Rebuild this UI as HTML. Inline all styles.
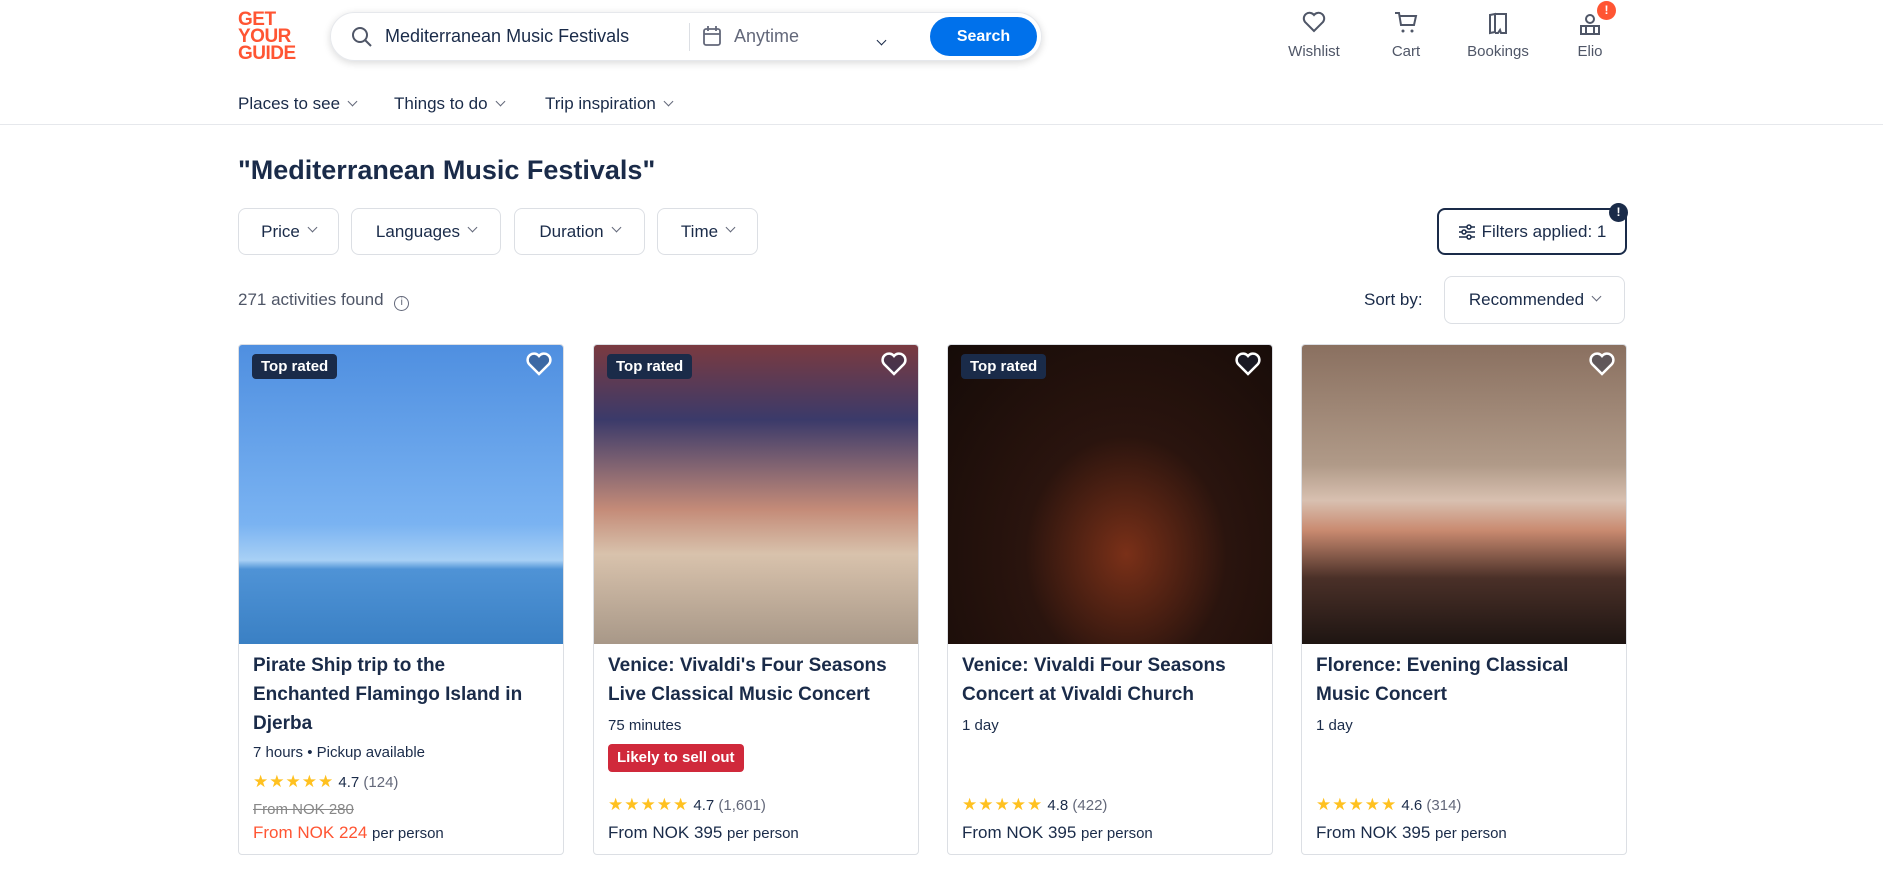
<!DOCTYPE html>
<html><head><meta charset="utf-8"><style>
*{box-sizing:border-box;margin:0;padding:0}
body{width:1883px;height:884px;overflow:hidden;background:#fff;font-family:"Liberation Sans",Arial,sans-serif;color:#1a2b49;position:relative}
.abs{position:absolute}
.logo{left:238px;top:11px;color:#ff5533;font-weight:bold;font-size:19px;line-height:17px;letter-spacing:-0.5px}
.search{left:330px;top:12px;width:712px;height:49px;border-radius:25px;box-shadow:0 2px 8px rgba(0,0,0,.15);border:1px solid #e6e8ec}
.sbtn{left:930px;top:17px;width:107px;height:39px;border-radius:20px;background:#0071eb;color:#fff;font-weight:bold;font-size:16px;text-align:center;line-height:39px}
.hi{text-align:center;font-size:15px;color:#4f5667;width:90px}
.nav{top:94px;font-size:17px}
.chev{display:inline-block;width:7px;height:7px;border-right:1.5px solid #63687a;border-bottom:1.5px solid #63687a;transform:rotate(45deg);margin-left:9px;position:relative;top:-4px}
.fb{top:208px;height:47px;border:1.5px solid #dcdfe4;border-radius:8px;font-size:17px;display:flex;align-items:center;justify-content:center}
.card{top:344px;width:326px;height:511px;border:1px solid #dcdfe4;border-radius:4px;overflow:hidden}
.img{height:299px;position:relative}
.tag{position:absolute;left:13px;top:9px;background:#1a2b49;color:#fff;font-weight:bold;font-size:15px;padding:4px 9px;border-radius:4px}
.heart{position:absolute;right:10px;top:6px}
.body>div{position:absolute;left:14px;line-height:28px}
.t{font-weight:bold;font-size:19px;line-height:29px!important;top:306px}
.m{font-size:15px}
.r{font-size:15px;color:#1a2b49}
.st{color:#ffc120;font-size:17px;letter-spacing:1px}
.p{font-size:17px}
</style></head><body>
<div class="abs logo">GET<br>YOUR<br>GUIDE</div>
<div class="abs search">
 <svg class="abs" style="left:20px;top:13px" width="22" height="22" viewBox="0 0 22 22"><circle cx="9" cy="9" r="7" fill="none" stroke="#4f5667" stroke-width="2"/><path d="M14 14l6 6" stroke="#4f5667" stroke-width="2"/></svg>
 <div class="abs" style="left:54px;top:13px;font-size:18px">Mediterranean Music Festivals</div>
 <div class="abs" style="left:358px;top:10px;width:1px;height:28px;background:#dcdfe4"></div>
 <svg class="abs" style="left:371px;top:12px" width="20" height="22" viewBox="0 0 20 22"><rect x="2" y="4" width="16" height="16" rx="2" fill="none" stroke="#63687a" stroke-width="1.8"/><path d="M2 9h16M6 1v5M14 1v5" stroke="#63687a" stroke-width="1.8"/></svg>
 <div class="abs" style="left:403px;top:13px;font-size:18px;color:#63687a">Anytime</div>
 <span class="abs chev" style="left:547px;top:18px;margin:0;border-color:#1a2b49"></span>
</div>
<div class="abs sbtn">Search</div>
<svg class="abs" style="left:1302px;top:11px" width="24" height="22" viewBox="0 0 24 22"><path d="M12 20L3 11a5 5 0 0 1 9-7 5 5 0 0 1 9 7z" fill="none" stroke="#4f5667" stroke-width="2"/></svg>
<div class="abs hi" style="left:1269px;top:43px">Wishlist</div>
<svg class="abs" style="left:1394px;top:11px" width="24" height="24" viewBox="0 0 24 24"><path d="M1 2h4l2 12h13l2-9H6" fill="none" stroke="#4f5667" stroke-width="2"/><circle cx="9" cy="20" r="1.5" fill="#4f5667"/><circle cx="18" cy="20" r="1.5" fill="#4f5667"/></svg>
<div class="abs hi" style="left:1361px;top:43px">Cart</div>
<svg class="abs" style="left:1486px;top:11px" width="24" height="24" viewBox="0 0 24 24"><path d="M4 4l5-1v18l-5 1zM9 3h11v19h-5l-1-3-2 3H9" fill="none" stroke="#4f5667" stroke-width="2"/></svg>
<div class="abs hi" style="left:1453px;top:43px">Bookings</div>
<svg class="abs" style="left:1578px;top:12px" width="24" height="24" viewBox="0 0 24 24"><circle cx="12" cy="7" r="4" fill="none" stroke="#4f5667" stroke-width="2"/><path d="M3 22v-8h18v8zM8 14v8M16 14v8" fill="none" stroke="#4f5667" stroke-width="2"/></svg>
<div class="abs" style="left:1597px;top:1px;width:19px;height:19px;border-radius:50%;background:#ff5533;color:#fff;font-size:12px;font-weight:bold;text-align:center;line-height:19px">!</div>
<div class="abs hi" style="left:1545px;top:43px">Elio</div>
<div class="abs nav" style="left:238px">Places to see<span class="chev"></span></div>
<div class="abs nav" style="left:394px">Things to do<span class="chev"></span></div>
<div class="abs nav" style="left:545px">Trip inspiration<span class="chev"></span></div>
<div class="abs" style="left:0;top:124px;width:1883px;height:1px;background:#e6e8ec"></div>
<div class="abs" style="left:238px;top:155px;font-size:27px;font-weight:bold">"Mediterranean Music Festivals"</div>
<div class="abs fb" style="left:238px;width:101px">Price<span class="chev"></span></div>
<div class="abs fb" style="left:351px;width:150px">Languages<span class="chev"></span></div>
<div class="abs fb" style="left:514px;width:131px">Duration<span class="chev"></span></div>
<div class="abs fb" style="left:657px;width:101px">Time<span class="chev"></span></div>
<div class="abs fb" style="left:1437px;width:190px;border:2px solid #1a2b49">
<svg width="18" height="16" viewBox="0 0 18 16" style="margin-right:6px"><path d="M1 3h16M1 8h16M1 13h16" stroke="#1a2b49" stroke-width="1.6"/><circle cx="11" cy="3" r="2" fill="#fff" stroke="#1a2b49" stroke-width="1.5"/><circle cx="6" cy="8" r="2" fill="#fff" stroke="#1a2b49" stroke-width="1.5"/><circle cx="11" cy="13" r="2" fill="#fff" stroke="#1a2b49" stroke-width="1.5"/></svg>Filters applied: 1</div>
<div class="abs" style="left:1609px;top:203px;width:19px;height:19px;border-radius:50%;background:#1a2b49;color:#fff;font-size:12px;font-weight:bold;text-align:center;line-height:19px">!</div>
<div class="abs" style="left:238px;top:290px;font-size:17px;color:#4f5667">271 activities found <span style="display:inline-block;width:15px;height:15px;border:1.5px solid #63687a;border-radius:50%;font-size:10px;text-align:center;line-height:12px;margin-left:6px">i</span></div>
<div class="abs" style="left:1364px;top:290px;font-size:17px">Sort by:</div>
<div class="abs fb" style="left:1444px;top:276px;width:181px;height:48px">Recommended<span class="chev"></span></div>

<div class="abs card" style="left:238px">
 <div class="img" style="background:linear-gradient(180deg,#4f8fe0 0%,#7ab3f2 60%,#a8d0f5 72%,#4f93d6 75%,#3a80c4 100%)"><div class="tag">Top rated</div>
 <svg class="heart" width="28" height="26" viewBox="0 0 28 26"><path d="M14 23L4 13a6 6 0 0 1 10-8 6 6 0 0 1 10 8z" fill="rgba(26,43,73,.4)" stroke="#fff" stroke-width="2.5"/></svg></div>
 <div class="body"><div class="t">Pirate Ship trip to the<br>Enchanted Flamingo Island in<br>Djerba</div>
 <div class="m" style="top:394px">7 hours • Pickup available</div>
 <div class="r" style="top:423px"><span class="st">★★★★★</span> 4.7 <span style="color:#63687a">(124)</span></div>
 <div style="top:451px;font-size:15px;color:#888;text-decoration:line-through">From NOK 280</div>
 <div class="p" style="top:474px;color:#ff5533">From NOK 224 <span style="color:#1a2b49;font-size:15px">per person</span></div></div>
</div>
<div class="abs card" style="left:593px">
 <div class="img" style="background:linear-gradient(180deg,#7a3a40 0%,#3b3a6a 25%,#c48b78 55%,#d8c2ac 70%,#a89888 100%)"><div class="tag">Top rated</div>
 <svg class="heart" width="28" height="26" viewBox="0 0 28 26"><path d="M14 23L4 13a6 6 0 0 1 10-8 6 6 0 0 1 10 8z" fill="rgba(26,43,73,.4)" stroke="#fff" stroke-width="2.5"/></svg></div>
 <div class="body"><div class="t">Venice: Vivaldi's Four Seasons<br>Live Classical Music Concert</div>
 <div class="m" style="top:367px">75 minutes</div>
 <div style="top:399px;background:#d0293b;color:#fff;font-weight:bold;font-size:15px;padding:0 9px;line-height:28px;border-radius:4px">Likely to sell out</div>
 <div class="r" style="top:446px"><span class="st">★★★★★</span> 4.7 <span style="color:#63687a">(1,601)</span></div>
 <div class="p" style="top:474px">From NOK 395 <span style="font-size:15px">per person</span></div></div>
</div>
<div class="abs card" style="left:947px">
 <div class="img" style="background:radial-gradient(ellipse at 55% 70%,#7a3018 0%,#2a140e 40%,#150b08 100%)"><div class="tag">Top rated</div>
 <svg class="heart" width="28" height="26" viewBox="0 0 28 26"><path d="M14 23L4 13a6 6 0 0 1 10-8 6 6 0 0 1 10 8z" fill="rgba(26,43,73,.4)" stroke="#fff" stroke-width="2.5"/></svg></div>
 <div class="body"><div class="t">Venice: Vivaldi Four Seasons<br>Concert at Vivaldi Church</div>
 <div class="m" style="top:367px">1 day</div>
 <div class="r" style="top:446px"><span class="st">★★★★★</span> 4.8 <span style="color:#63687a">(422)</span></div>
 <div class="p" style="top:474px">From NOK 395 <span style="font-size:15px">per person</span></div></div>
</div>
<div class="abs card" style="left:1301px">
 <div class="img" style="background:linear-gradient(180deg,#8a7060 0%,#b09a88 40%,#d8c0b0 52%,#c98a70 62%,#4a3028 78%,#1e1512 100%)">
 <svg class="heart" width="28" height="26" viewBox="0 0 28 26"><path d="M14 23L4 13a6 6 0 0 1 10-8 6 6 0 0 1 10 8z" fill="rgba(26,43,73,.4)" stroke="#fff" stroke-width="2.5"/></svg></div>
 <div class="body"><div class="t">Florence: Evening Classical<br>Music Concert</div>
 <div class="m" style="top:367px">1 day</div>
 <div class="r" style="top:446px"><span class="st">★★★★★</span> 4.6 <span style="color:#63687a">(314)</span></div>
 <div class="p" style="top:474px">From NOK 395 <span style="font-size:15px">per person</span></div></div>
</div>
</body></html>
